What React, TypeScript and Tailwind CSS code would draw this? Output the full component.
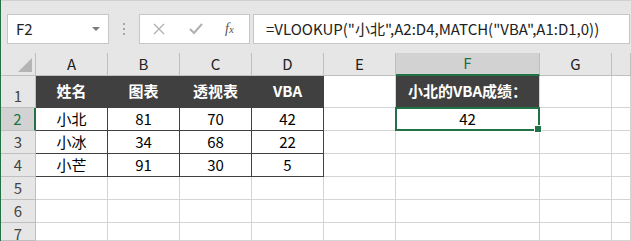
import React from "react";

const cols = ["A", "B", "C", "D", "E", "F", "G", ""];
const widths = ["w-[72px]", "w-[72px]", "w-[72px]", "w-[72px]", "w-[72px]", "w-[144px]", "w-[72px]", "w-[19px]"];

const table = [
  ["姓名", "图表", "透视表", "VBA"],
  ["小北", "81", "70", "42"],
  ["小冰", "34", "68", "22"],
  ["小芒", "91", "30", "5"],
];

const font = { fontFamily: '"Noto Sans CJK SC", "Noto Sans", sans-serif' };

function Cell({ row, col }: { row: number; col: number }) {
  const inTable = row <= 4 && col <= 3;
  const header = row === 1 && col <= 3;
  const w = widths[col];

  if (row === 1 && col === 5) {
    return (
      <div className={`${w} h-full bg-[#404040] border-r border-b border-[#d4d4d4] flex items-center justify-center text-white font-bold text-[15px]`}>
        小北的VBA成绩：
      </div>
    );
  }
  if (row === 2 && col === 5) {
    return (
      <div className={`${w} h-full relative border-r border-b border-[#d4d4d4] flex items-center justify-center text-[15px] text-black`}>
        42
        <div className="absolute -left-px -top-px -right-px -bottom-px border-2 border-[#217346]" />
        <div className="absolute -right-[3px] -bottom-[3px] w-[6px] h-[6px] bg-[#217346] border border-white box-content" />
      </div>
    );
  }
  if (inTable) {
    return (
      <div
        className={`${w} h-full border-r border-b flex items-center justify-center text-[15px] ${
          header ? "bg-[#404040] text-white font-bold border-[#404040]" : "bg-white text-black border-[#404040]"
        }`}
      >
        {table[row - 1][col]}
      </div>
    );
  }
  return <div className={`${w} h-full border-r border-b border-[#d4d4d4]`} />;
}

function Row({ n, h, align }: { n: number; h: string; align: string }) {
  const sel = n === 2;
  return (
    <div className={`flex shrink-0 ${h}`}>
      <div
        className={`w-[35px] h-full overflow-hidden border-b border-[#bfbfbf] flex justify-center text-[15px] leading-[20px] ${align} ${
          sel ? "bg-[#d2d2d2] text-[#217346] border-r-2 border-r-[#217346]" : "bg-[#e6e6e6] text-[#444] border-r border-r-[#bfbfbf]"
        }`}
      >
        {n}
      </div>
      {cols.map((_, c) => (
        <Cell key={c} row={n} col={c} />
      ))}
    </div>
  );
}

export default function App() {
  return (
    <div className="w-[631px] h-[241px] overflow-hidden bg-white border-l border-[#217346] flex flex-col text-[#222]" style={font}>
      {/* formula bar */}
      <div className="h-[53px] shrink-0 bg-[#e6e6e6] border-t border-[#d0d0d0] flex items-start pt-[13px] pl-[6px] pr-px">
        <div className="w-[102px] h-[30px] bg-white border border-[#c6c6c6] flex items-center pl-[8px] pr-[8px] justify-between">
          <span className="text-[15px] text-[#222]">F2</span>
          <svg width="8" height="5" viewBox="0 0 8 5">
            <path d="M0 0 L8 0 L4 4 Z" fill="#7a7a7a" />
          </svg>
        </div>
        <div className="w-[30px] h-[30px] flex flex-col items-center justify-center gap-[3px]">
          <div className="w-[2px] h-[2px] bg-[#a6a6a6]" />
          <div className="w-[2px] h-[2px] bg-[#a6a6a6]" />
          <div className="w-[2px] h-[2px] bg-[#a6a6a6]" />
        </div>
        <div className="w-[111px] h-[30px] bg-white border border-[#c6c6c6] flex items-center pl-[12px]">
          <svg width="12" height="12" viewBox="0 0 12 12" className="ml-[1px]">
            <path d="M1 1 L11 11 M11 1 L1 11" stroke="#b0b0b0" strokeWidth="1.3" />
          </svg>
          <svg width="14" height="12" viewBox="0 0 14 12" className="ml-[24px]">
            <path d="M1 6 L5 10 L13 1" stroke="#b0b0b0" strokeWidth="2" fill="none" />
          </svg>
          <span className="ml-[22px] italic text-[14px] text-[#555] leading-none" style={{ fontFamily: '"Liberation Serif", serif' }}>
            f<span className="text-[11px]">x</span>
          </span>
        </div>
        <div className="flex-1 ml-[3px] h-[30px] bg-white border border-[#c6c6c6] flex items-center pl-[12px] text-[15px] text-[#222] whitespace-nowrap">
          =VLOOKUP("小北",A2:D4,MATCH("VBA",A1:D1,0))
        </div>
      </div>

      {/* column headers */}
      <div className="flex h-[23px] shrink-0">
        <div className="w-[35px] h-full bg-[#e6e6e6] border-r border-b border-[#bfbfbf] flex items-end justify-end p-[3px]">
          <svg width="14" height="14" viewBox="0 0 14 14">
            <path d="M14 0 L14 14 L0 14 Z" fill="#b4b4b4" />
          </svg>
        </div>
        {cols.map((c, i) => (
          <div
            key={i}
            className={`${widths[i]} h-full border-r border-[#bfbfbf] flex items-center justify-center text-[15px] ${
              c === "F" ? "bg-[#d2d2d2] text-[#217346] border-b-2 border-b-[#217346]" : "bg-[#e6e6e6] text-[#222] border-b border-b-[#bfbfbf]"
            }`}
          >
            {c}
          </div>
        ))}
      </div>

      <Row n={1} h="h-[32px]" align="items-end pb-[1px]" />
      <Row n={2} h="h-[23px]" align="items-center" />
      <Row n={3} h="h-[23px]" align="items-center" />
      <Row n={4} h="h-[23px]" align="items-center" />
      <Row n={5} h="h-[23px]" align="items-center" />
      <Row n={6} h="h-[23px]" align="items-center" />
      <Row n={7} h="h-[18px]" align="items-start pt-[1px]" />
    </div>
  );
}
